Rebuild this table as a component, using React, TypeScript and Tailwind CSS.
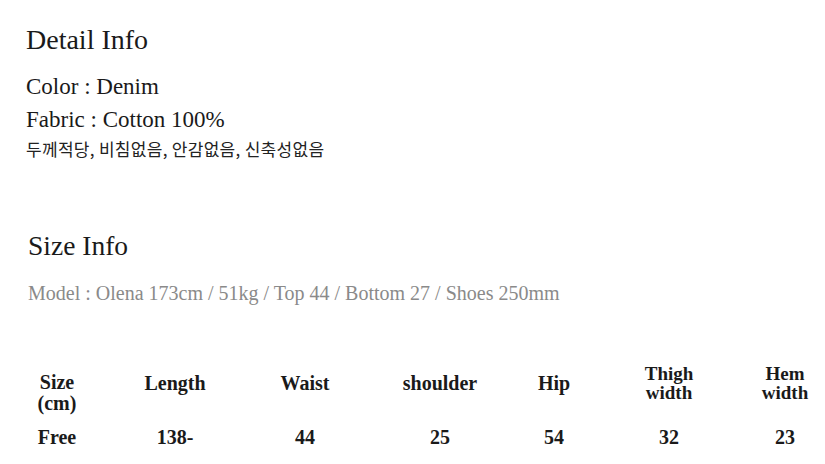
const serif = "font-['Liberation_Serif','Times_New_Roman',serif]";

const headers = [
  { lines: ["Size", "(cm)"], cls: "self-start justify-start pt-[13px] leading-[21px]" },
  { lines: ["Length"], cls: "justify-center leading-[20px]" },
  { lines: ["Waist"], cls: "justify-center leading-[20px]" },
  { lines: ["shoulder"], cls: "justify-center leading-[20px]" },
  { lines: ["Hip"], cls: "justify-center leading-[20px]" },
  { lines: ["Thigh", "width"], cls: "justify-start pt-[5px] text-[19px] leading-[19px]" },
  { lines: ["Hem", "width"], cls: "justify-start pt-[5px] text-[19px] leading-[19px]" },
];

const values = ["Free", "138-", "44", "25", "54", "32", "23"];

export default function App() {
  return (
    <div className={`h-[464px] w-[825px] overflow-hidden bg-white text-[#1a1a1a] ${serif}`}>
      <section className="pl-[26px] pt-[24px]">
        <h2 className="text-[28px] leading-[32px]">Detail Info</h2>
        <div className="mt-[14px] text-[23px] leading-[33px]">
          <p>Color : Denim</p>
          <p>Fabric : Cotton 100%</p>
        </div>
        <p className="mt-[1px] font-['Noto_Sans_CJK_KR',sans-serif] text-[17px] leading-[24px] tracking-[0.3px] text-[#222]">
          두께적당, 비침없음, 안감없음, 신축성없음
        </p>
      </section>

      <section className="pl-[28px] pt-[69px]">
        <h2 className="text-[27.5px] leading-[32px]">Size Info</h2>
        <p className="mt-[19px] text-[20px] leading-[24px] text-[#8a8a8a]">
          Model : Olena 173cm / 51kg / Top 44 / Bottom 27 / Shoes 250mm
        </p>
      </section>

      <div className="mt-[54px] grid grid-cols-[114px_122px_138px_132px_96px_134px_98px] justify-items-center text-[20px] font-bold">
        {headers.map((h, i) => (
          <div key={i} className={`flex h-[48px] flex-col items-center ${h.cls}`}>
            {h.lines.map((l) => (
              <span key={l} className="block">
                {l}
              </span>
            ))}
          </div>
        ))}
        {values.map((v, i) => (
          <div key={i} className="mt-[18px] leading-[24px]">
            {v}
          </div>
        ))}
      </div>
    </div>
  );
}
